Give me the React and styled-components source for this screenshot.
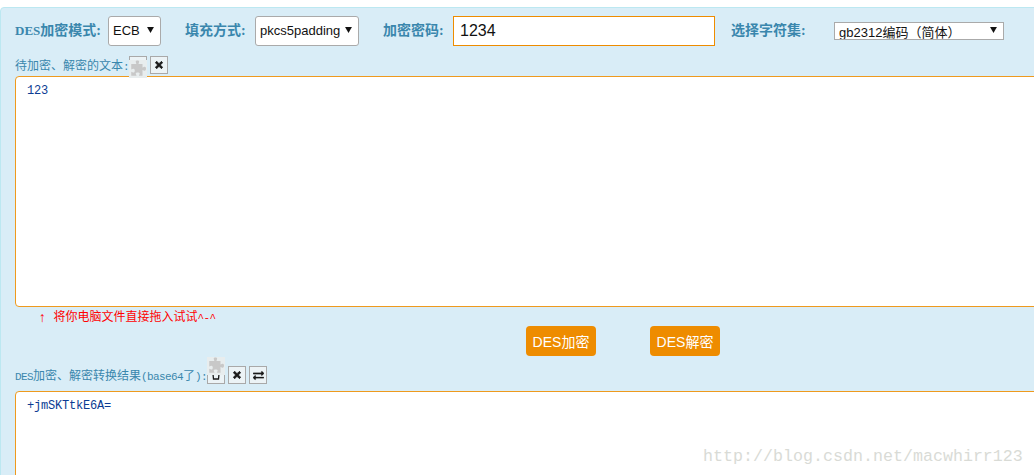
import React from "react";
import styled, { createGlobalStyle } from "styled-components";
import { FaTimes, FaExchangeAlt } from "react-icons/fa";

const CJK = '"Noto Sans CJK SC", sans-serif';

const GlobalStyle = createGlobalStyle`
  html, body {
    margin: 0;
    background: #fff;
    overflow: hidden;
  }
  #root {
    height: 475px;
    overflow: hidden;
    position: relative;
  }
`;

const Panel = styled.div`
  box-sizing: border-box;
  width: 1100px;
  height: 560px;
  margin-top: 7px;
  padding: 8px 0 0 14px;
  background: #d9edf7;
  border: 1px solid #bce8f1;
  border-radius: 4px;
  display: flex;
  flex-direction: column;
`;

const TopRow = styled.div`
  display: flex;
  align-items: center;
  height: 30px;
`;

const FieldLabel = styled.label`
  width: ${(p) => p.$w}px;
  margin-left: ${(p) => p.$ml || 0}px;
  padding-bottom: 4px;
  flex: none;
  color: #3a87ad;
  font: bold 14px "Liberation Serif", ${CJK};
`;

const Serif = styled.span`
  font-size: 13px;
`;

const SelectBox = styled.div`
  box-sizing: border-box;
  width: ${(p) => p.$w}px;
  height: ${(p) => (p.$small ? 18 : 30)}px;
  flex: none;
  display: flex;
  align-items: ${(p) => (p.$small ? "flex-start" : "center")};
  justify-content: space-between;
  padding: ${(p) => (p.$small ? "1px 6px 0 4px" : "0 6px 0 4px")};
  background: #fff;
  border: 1px solid #aaa;
  border-radius: ${(p) => (p.$small ? 0 : 3)}px;
  overflow: hidden;
  color: #111;
  font: 13px/18px "Liberation Sans", ${CJK};
  white-space: nowrap;
`;

const Caret = styled.svg`
  width: 7px;
  height: 6px;
  flex: none;
  margin-top: ${(p) => (p.$small ? 3 : -2)}px;
  fill: #111;
`;

const KeyInput = styled.input`
  box-sizing: border-box;
  width: 262px;
  height: 30px;
  flex: none;
  padding: 0 6px;
  border: 1px solid #ee8c00;
  background: #fff;
  color: #111;
  font: 16px "Liberation Sans", sans-serif;
  outline: none;
`;

const ToolRow = styled.div`
  display: flex;
  align-items: flex-start;
  height: ${(p) => p.$h}px;
  margin-top: ${(p) => p.$mt}px;
`;

const SmallLabel = styled.span`
  width: ${(p) => p.$w}px;
  flex: none;
  margin-top: ${(p) => p.$top}px;
  color: #3a87ad;
  font: 12px/18px "Liberation Mono", ${CJK};
  white-space: nowrap;
`;

const Narrow = styled.span`
  font-size: 11px;
  letter-spacing: -0.6px;
`;

const ToolSlot = styled.div`
  position: relative;
  width: 18px;
  height: 18px;
  flex: none;
  margin-top: ${(p) => p.$top}px;
`;

const ToolButton = styled.button`
  box-sizing: border-box;
  width: 18px;
  height: 18px;
  flex: none;
  margin: ${(p) => p.$top || 0}px 0 0 3px;
  padding: 0;
  display: flex;
  align-items: center;
  justify-content: center;
  background: #ecf3f6;
  border: 1px solid #a9a9a9;
  color: #1a1a1a;
  font-size: ${(p) => p.$size || 10}px;

  svg {
    stroke: currentColor;
    stroke-width: ${(p) => p.$weight || 50}px;
  }
`;

const EmptyButton = styled(ToolButton)`
  margin: 0;
`;

const PluginBlock = styled.div`
  position: absolute;
  left: 0;
  top: ${(p) => p.$top}px;
  width: 18px;
  height: 18px;
  background: #e8edee;
  display: flex;
  align-items: center;
  justify-content: center;
`;

const PuzzleSvg = styled.svg`
  width: 18px;
  height: 18px;
  fill: #c8c8c8;
`;

const Editor = styled.textarea`
  box-sizing: border-box;
  display: block;
  width: 1085px;
  height: ${(p) => p.$h}px;
  flex: none;
  padding: 7px 11px;
  background: #fff;
  border: 1px solid #ee9a1e;
  border-radius: 4px;
  color: #0b3c93;
  font: 12px/14px "Liberation Mono", monospace;
  letter-spacing: -0.2px;
  resize: none;
  outline: none;
`;

const Hint = styled.div`
  height: 19px;
  padding: 2px 0 0 23px;
  box-sizing: border-box;
  display: flex;
  align-items: center;
  gap: 7px;
  color: #f00;
  font: 12px/18px "Liberation Mono", ${CJK};
`;

const HintArrow = styled.span`
  font-size: 14px;
  font-weight: bold;
`;

const ActionRow = styled.div`
  display: flex;
  gap: 54px;
  height: 30px;
  padding-left: 511px;
`;

const ActionButton = styled.button`
  width: 70px;
  height: 30px;
  padding: 0;
  border: none;
  border-radius: 4px;
  background: #ee8c00;
  color: #fff;
  font: 14px "Liberation Sans", ${CJK};
`;

const Watermark = styled.div`
  position: absolute;
  left: 703px;
  top: 446px;
  color: #d9dbd6;
  font: 16.67px/22px "Liberation Mono", monospace;
  white-space: nowrap;
`;

const Arrow = () => (
  <Caret viewBox="0 0 8 7">
    <path d="M0 0h8L4 7z" />
  </Caret>
);

const SmallArrow = () => (
  <Caret $small viewBox="0 0 8 7">
    <path d="M0 0h8L4 7z" />
  </Caret>
);

const Puzzle = () => (
  <PuzzleSvg viewBox="0 0 16 16">
    <path d="M6 1.500c0-1.300 3-1.300 3 0 0 .8-.5 1-.5 2H12v3.200c1-.2 1.300-.7 2-.7 1.500 0 1.500 3.500 0 3.500-.7 0-1-.5-2-.7V14H8.800c.2-1 .7-1.300.7-2 0-1.200-3.500-1.200-3.500 0 0 .7.500 1 .7 2H2v-3.500c1 .2 1.300.7 2 .7 1.500 0 1.500-3.500 0-3.500-.7 0-1 .5-2 .7V3.500h4.500C6.500 2.700 6 2.300 6 1.500z" />
  </PuzzleSvg>
);

const CupIcon = () => (
  <svg width="12" height="12" viewBox="0 0 120 120" fill="none">
    <path d="M10 50h100M30 50l5 50h50l5-50" strokeWidth="13" />
  </svg>
);

const App = () => (
  <>
    <GlobalStyle />
    <Panel>
      <TopRow>
        <FieldLabel $w={93}><Serif>DES</Serif>加密模式:</FieldLabel>
        <SelectBox $w={53}>ECB<Arrow /></SelectBox>
        <FieldLabel $w={70} $ml={24}>填充方式:</FieldLabel>
        <SelectBox $w={104}>pkcs5padding<Arrow /></SelectBox>
        <FieldLabel $w={70} $ml={24}>加密密码:</FieldLabel>
        <KeyInput defaultValue="1234" />
        <FieldLabel $w={103} $ml={16}>选择字符集:</FieldLabel>
        <SelectBox $small $w={170}>gb2312编码（简体）<SmallArrow /></SelectBox>
      </TopRow>

      <ToolRow $mt={10} $h={20}>
        <SmallLabel $w={114} $top={2}>待加密、解密的文本<Narrow>:</Narrow></SmallLabel>
        <ToolSlot $top={0}>
          <EmptyButton />
          <PluginBlock $top={4}><Puzzle /></PluginBlock>
        </ToolSlot>
        <ToolButton><FaTimes /></ToolButton>
      </ToolRow>
      <Editor $h={231} defaultValue="123" />

      <Hint>
        <HintArrow>↑</HintArrow>
        <span>将你电脑文件直接拖入试试<Narrow>^-^</Narrow></span>
      </Hint>

      <ActionRow>
        <ActionButton>DES加密</ActionButton>
        <ActionButton>DES解密</ActionButton>
      </ActionRow>

      <ToolRow $mt={1} $h={34}>
        <SmallLabel $w={192} $top={11}>
          <Narrow>DES</Narrow>加密、解密转换结果<Narrow>(base64</Narrow>了<Narrow>):</Narrow>
        </SmallLabel>
        <ToolSlot $top={9}>
          <EmptyButton $weight={13}><CupIcon /></EmptyButton>
          <PluginBlock $top={-9}><Puzzle /></PluginBlock>
        </ToolSlot>
        <ToolButton $top={9}><FaTimes /></ToolButton>
        <ToolButton $top={9} $size={11} $weight={10}><FaExchangeAlt /></ToolButton>
      </ToolRow>
      <Editor $h={150} defaultValue="+jmSKTtkE6A=" />
    </Panel>
    <Watermark>http://blog.csdn.net/macwhirr123</Watermark>
  </>
);

export default App;
